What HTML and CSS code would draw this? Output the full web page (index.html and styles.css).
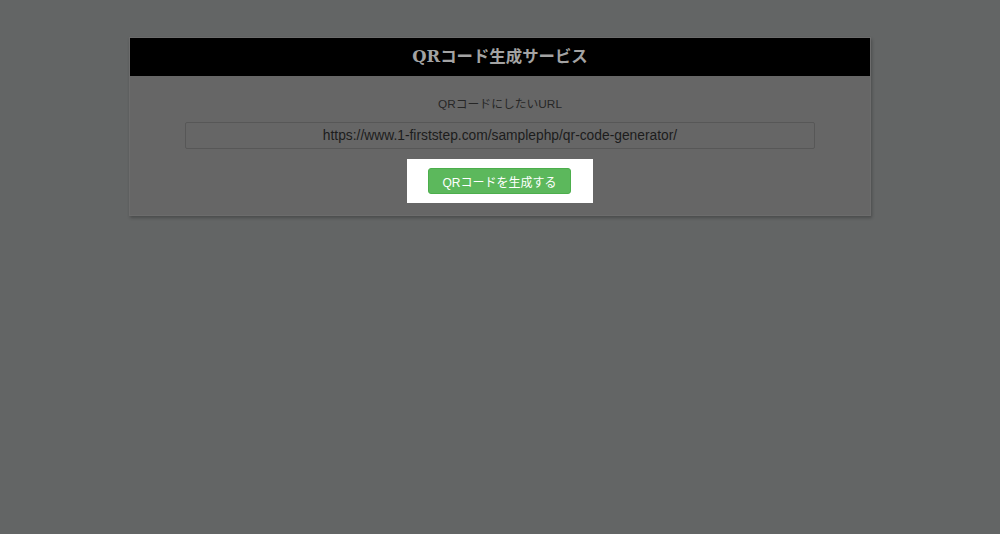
FILE: index.html
```html
<!DOCTYPE html>
<html lang="ja">
<head>
    <meta charset="UTF-8">
    <meta name="viewport" content="width=device-width, initial-scale=1.0">
    <title>QRコード生成サービス</title>
    <link rel="stylesheet" href="styles.css">
</head>
<body>
    <div class="qr-box">
        <h1 class="qr-title">QRコード生成サービス</h1>
        <div class="qr-body">
            <p class="qr-label">QRコードにしたいURL</p>
            <input type="text" class="qr-input" value="https://www.1-firststep.com/samplephp/qr-code-generator/">
            <div class="spotlight">
                <button class="qr-button">QRコードを生成する</button>
            </div>
        </div>
    </div>
</body>
</html>
```

FILE: styles.css
```css
body {
    margin: 0;
    padding: 0;
    background-color: #636565;
    font-family: 'Liberation Sans', 'Noto Sans CJK JP', sans-serif;
    color: #2a2a2a;
    width: 100vw;
    height: 100vh;
}

.qr-box {
    width: 740px;
    margin: 37px auto 0;
    background-color: #666666;
    border: 1px solid #6c6c6c;
    box-shadow: 1px 2px 3px rgba(0, 0, 0, 0.25);
}

.qr-title {
    margin: 0;
    height: 38px;
    line-height: 38px;
    background-color: #000;
    color: #a3a3a3;
    font-family: 'DejaVu Serif', 'Noto Sans CJK JP', serif;
    font-size: 16.4px;
    font-weight: bold;
    text-align: center;
}

.qr-body {
    display: flex;
    flex-direction: column;
    align-items: center;
    padding: 20px 55px 12px;
}

.qr-label {
    margin: 0 0 10px;
    font-size: 11.8px;
    line-height: 16px;
    color: #262626;
}

.qr-input {
    box-sizing: border-box;
    width: 100%;
    height: 27px;
    padding: 0 8px;
    background-color: #666666;
    border: 1px solid #575757;
    border-radius: 2px;
    font-family: 'Liberation Sans', 'Noto Sans CJK JP', sans-serif;
    font-size: 13.8px;
    color: #1c1c1c;
    text-align: center;
}

.spotlight {
    margin-top: 10px;
    padding: 9px 22px 9px 21px;
    background-color: #fff;
}

.qr-button {
    display: block;
    width: 143px;
    height: 26px;
    padding: 0;
    background-color: #5cb85c;
    border: 1px solid #4cae4c;
    border-radius: 3px;
    color: #fff;
    font-family: 'Liberation Sans', 'Noto Sans CJK JP', sans-serif;
    font-size: 12px;
    cursor: pointer;
}
```
